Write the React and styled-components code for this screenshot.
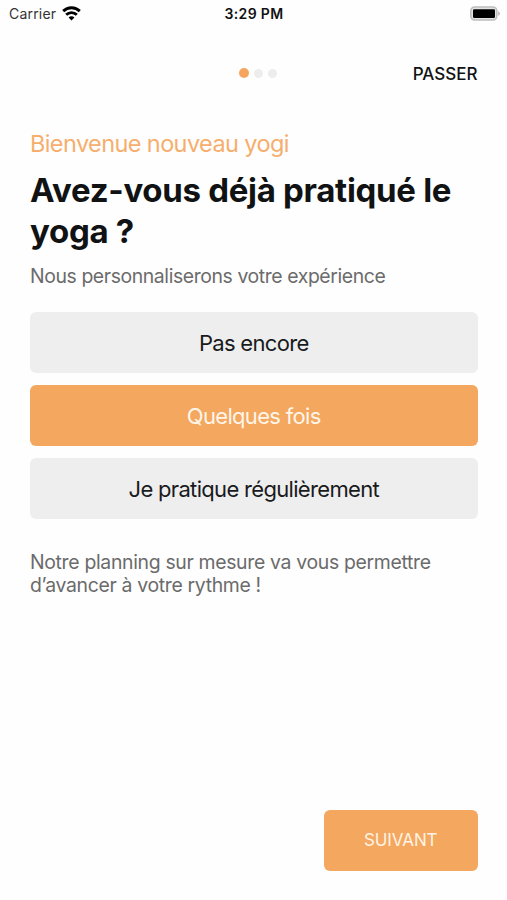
import React, { useState } from 'react';
import styled, { createGlobalStyle } from 'styled-components';

const GlobalStyle = createGlobalStyle`
  * { box-sizing: border-box; }
  body {
    margin: 0;
    background: #fefefe;
    font-family: Inter, 'Liberation Sans', sans-serif;
    color: #111213;
  }
  button {
    border: 0;
    padding: 0;
    font: inherit;
    color: inherit;
    background: none;
    cursor: pointer;
  }
`;

const Screen = styled.div`
  display: flex;
  flex-direction: column;
  height: 900px;
  overflow: hidden;
`;

const StatusBar = styled.header`
  display: grid;
  grid-template-columns: 1fr auto 1fr;
  align-items: center;
  height: 27px;
  padding: 0 6px 0 9px;
  font-size: 14px;
  line-height: 27px;
`;

const Carrier = styled.div`
  display: flex;
  align-items: center;
  gap: 5.5px;
  color: #333;
  letter-spacing: 0.2px;
`;

const Clock = styled.div`
  font-weight: 600;
  letter-spacing: 0.35px;
  margin-right: 2px;
`;

const BatterySlot = styled.div`
  display: flex;
  justify-content: flex-end;
`;

const TopNav = styled.nav`
  display: grid;
  grid-template-columns: 1fr auto 1fr;
  align-items: center;
  height: 92px;
  padding: 0 29.5px 0 30px;
`;

const Dots = styled.div`
  grid-column: 2;
  display: flex;
  align-items: center;
  gap: 5px;
  padding-left: 7.5px;
`;

const Dot = styled.span`
  width: ${(p) => (p.$active ? 10 : 9)}px;
  height: ${(p) => (p.$active ? 10 : 9)}px;
  border-radius: 50%;
  background: ${(p) => (p.$active ? '#f5a55d' : '#ededed')};
`;

const Skip = styled.button`
  justify-self: end;
  padding-top: 1px;
  font-size: 17px;
  font-weight: 500;
`;

const Content = styled.main`
  flex: 1;
  display: flex;
  flex-direction: column;
  padding: 9px 29.5px 0 30px;
`;

const Welcome = styled.p`
  margin: 0;
  font-size: 23.5px;
  font-weight: 400;
  line-height: 31px;
  letter-spacing: -0.6px;
  color: #f6ae6d;
`;

const Title = styled.h1`
  margin: 11px 0 0;
  font-size: 33px;
  font-weight: 700;
  line-height: 41px;
  letter-spacing: -0.3px;
`;

const Copy = styled.p`
  margin: ${(p) => p.$top}px 0 0;
  font-size: 19.4px;
  line-height: 23px;
  letter-spacing: ${(p) => p.$tracking}px;
  color: #6b6b6b;
`;

const Options = styled.div`
  display: flex;
  flex-direction: column;
  gap: 12px;
  margin-top: 24px;
`;

const Option = styled.button`
  height: 61px;
  border-radius: 6px;
  font-size: 22px;
  line-height: 60px;
  letter-spacing: -0.68px;
  background: ${(p) => (p.$selected ? '#f4a75f' : '#eeeeee')};
  color: ${(p) => (p.$selected ? '#fff5e9' : '#191a1c')};
`;

const Footer = styled.footer`
  display: flex;
  justify-content: flex-end;
  padding: 0 29.5px 29.5px;
`;

const Next = styled.button`
  width: 153.5px;
  height: 61px;
  border-radius: 6px;
  background: #f4a75f;
  color: #fff3e5;
  font-size: 17px;
  letter-spacing: -0.1px;
`;

const WifiIcon = () => (
  <svg width="19" height="15" viewBox="0 0 19 15" fill="none" stroke="#000" strokeWidth="2.9">
    <path d="M1.2 5.1a11.9 11.9 0 0 1 16.6 0" />
    <path d="M4.2 8.8a7.5 7.5 0 0 1 10.6 0" />
    <path d="M9.5 14.4 6.6 11.5a4 4 0 0 1 5.8 0Z" fill="#000" stroke="none" />
  </svg>
);

const BatteryIcon = () => (
  <svg width="32" height="15" viewBox="0 0 32 15">
    <rect x="1.8" y="1" width="26" height="13" rx="4" fill="#e4e4e4" stroke="#bdbdbd" strokeWidth="1.6" />
    <rect x="4" y="3.2" width="22" height="8.8" rx="1.2" fill="#000" />
    <path d="M29.2 5.2c2.2.7 2.2 3.9 0 4.6Z" fill="#b5b5b5" />
  </svg>
);

const LEVELS = ['Pas encore', 'Quelques fois', 'Je pratique régulièrement'];

export default function App() {
  const [level, setLevel] = useState(1);
  return (
    <>
      <GlobalStyle />
      <Screen>
        <StatusBar>
          <Carrier>
            Carrier
            <WifiIcon />
          </Carrier>
          <Clock>3:29 PM</Clock>
          <BatterySlot>
            <BatteryIcon />
          </BatterySlot>
        </StatusBar>
        <TopNav>
          <Dots>
            <Dot $active />
            <Dot />
            <Dot />
          </Dots>
          <Skip>PASSER</Skip>
        </TopNav>
        <Content>
          <Welcome>Bienvenue nouveau yogi</Welcome>
          <Title>Avez-vous déjà pratiqué le yoga ?</Title>
          <Copy $top={13} $tracking={-0.4}>Nous personnaliserons votre expérience</Copy>
          <Options>
            {LEVELS.map((label, i) => (
              <Option key={label} $selected={i === level} onClick={() => setLevel(i)}>
                {label}
              </Option>
            ))}
          </Options>
          <Copy $top={32} $tracking={-0.32}>
            Notre planning sur mesure va vous permettre d’avancer à votre rythme !
          </Copy>
        </Content>
        <Footer>
          <Next>SUIVANT</Next>
        </Footer>
      </Screen>
    </>
  );
}
